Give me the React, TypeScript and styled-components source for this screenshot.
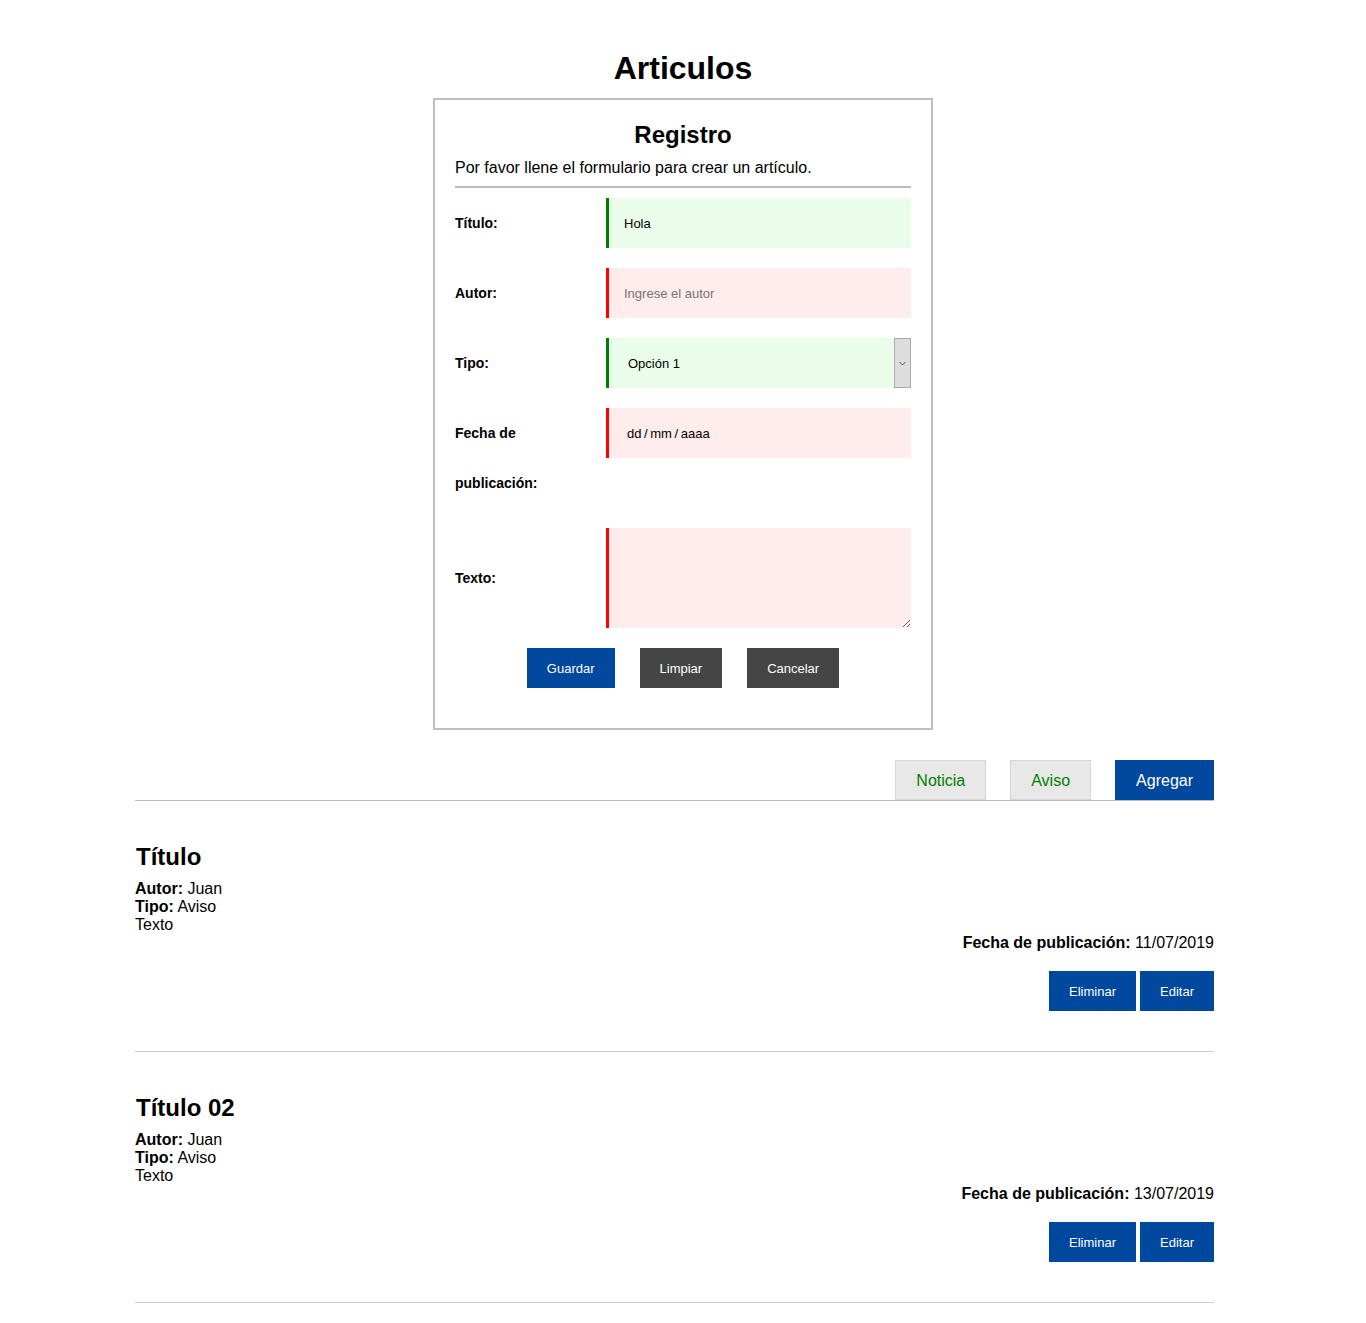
import React from "react";
import styled, { createGlobalStyle, css } from "styled-components";

const GlobalStyle = createGlobalStyle`
  html, body { margin: 0; padding: 0; background: #fff; }
  body {
    font-family: "Liberation Sans", Arial, sans-serif;
    color: #000;
  }
  * { box-sizing: border-box; }
`;

const Page = styled.div`
  padding-bottom: 20px;
`;

const PageTitle = styled.h1`
  text-align: center;
  font-size: 32px;
  line-height: 37px;
  font-weight: bold;
  margin: 50px 0 11px;
`;

const FormCard = styled.form`
  width: 500px;
  margin: 0 auto;
  border: 2px solid #bfbfbf;
  padding: 21px 20px 40px;
`;

const CardTitle = styled.h2`
  text-align: center;
  font-size: 24px;
  line-height: 28px;
  margin: 0;
`;

const CardSubtitle = styled.p`
  font-size: 16px;
  line-height: 20px;
  margin: 9px 0 0;
`;

const Divider = styled.div`
  border-top: 2px solid #bbb;
  margin: 8px 0 10px;
`;

const FieldRow = styled.div<{ $center?: boolean }>`
  display: grid;
  grid-template-columns: 151px 1fr;
  align-items: ${(p) => (p.$center ? "center" : "start")};
  margin-bottom: 20px;
`;

const FieldLabel = styled.label`
  font-weight: bold;
  font-size: 14px;
  line-height: 50px;
  padding-right: 20px;
`;

const fieldBase = css<{ $valid: boolean }>`
  width: 100%;
  border: none;
  border-left: 3px solid ${(p) => (p.$valid ? "#008000" : "#ff0000")};
  background: ${(p) => (p.$valid ? "#eafdea" : "#ffecec")};
  font-family: "Liberation Sans", Arial, sans-serif;
  font-size: 13px;
  color: #000;
  outline: none;
`;

const TextInput = styled.input<{ $valid: boolean }>`
  ${fieldBase};
  height: 50px;
  padding: 0 15px;
  &::placeholder { color: #757575; }
`;

const DateInput = styled(TextInput)`
  padding-left: 18px;
  word-spacing: -1px;
`;

const SelectWrap = styled.div<{ $valid: boolean }>`
  ${fieldBase};
  height: 50px;
  display: flex;
  align-items: stretch;
`;

const NativeSelect = styled.select`
  flex: 1;
  appearance: none;
  -webkit-appearance: none;
  border: none;
  background: transparent;
  font-family: "Liberation Sans", Arial, sans-serif;
  font-size: 13px;
  color: #000;
  padding: 0 0 0 19px;
  outline: none;
`;

const ArrowBox = styled.span`
  width: 17px;
  background: #dddddd;
  border: 1px solid #a9a9a9;
  display: flex;
  align-items: center;
  justify-content: center;
`;

const TextArea = styled.textarea<{ $valid: boolean }>`
  ${fieldBase};
  height: 100px;
  padding: 10px 15px;
  resize: vertical;
  display: block;
`;

const ButtonRow = styled.div`
  display: flex;
  justify-content: center;
  gap: 25px;
`;

const SolidButton = styled.button<{ $tone: "primary" | "dark" }>`
  height: 40px;
  padding: 0 20px;
  border: none;
  color: #fff;
  font-family: "Liberation Sans", Arial, sans-serif;
  font-size: 13px;
  background: ${(p) => (p.$tone === "primary" ? "#00479e" : "#454545")};
  cursor: pointer;
`;

const Section = styled.div`
  width: 1079px;
  margin-left: 135px;
`;

const Toolbar = styled.div`
  display: flex;
  justify-content: flex-end;
  gap: 24px;
  margin-top: 30px;
  border-bottom: 1px solid #bbb;
`;

const TabButton = styled.button<{ $active?: boolean }>`
  height: 40px;
  padding: 2px 20px 0;
  font-family: "Liberation Sans", Arial, sans-serif;
  font-size: 16px;
  border: 1px solid ${(p) => (p.$active ? "#00479e" : "#d6d6d6")};
  background: ${(p) => (p.$active ? "#00479e" : "#e8e8e8")};
  color: ${(p) => (p.$active ? "#fff" : "#008000")};
  cursor: pointer;
`;

const ArticleCard = styled.article`
  padding: 41px 0 40px;
  border-bottom: 1px solid #ccc;
`;

const ArticleTitle = styled.h2`
  font-size: 24px;
  line-height: 30px;
  margin: 0 0 8px 1px;
`;

const MetaLine = styled.div<{ $right?: boolean }>`
  font-size: 16px;
  line-height: 18px;
  text-align: ${(p) => (p.$right ? "right" : "left")};
`;

const ActionRow = styled.div`
  display: flex;
  justify-content: flex-end;
  gap: 4px;
  margin-top: 19px;
`;

const Chevron = () => (
  <svg width="7" height="5" viewBox="0 0 7 5">
    <path d="M0.5 1 L3.5 4 L6.5 1" fill="none" stroke="#555" strokeWidth="1" />
  </svg>
);

const articles = [
  { title: "Título", autor: "Juan", tipo: "Aviso", texto: "Texto", fecha: "11/07/2019" },
  { title: "Título 02", autor: "Juan", tipo: "Aviso", texto: "Texto", fecha: "13/07/2019" },
];

export default function App() {
  return (
    <Page>
      <GlobalStyle />
      <PageTitle>Articulos</PageTitle>
      <FormCard onSubmit={(e) => e.preventDefault()}>
        <CardTitle>Registro</CardTitle>
        <CardSubtitle>Por favor llene el formulario para crear un artículo.</CardSubtitle>
        <Divider />
        <FieldRow>
          <FieldLabel>Título:</FieldLabel>
          <TextInput $valid defaultValue="Hola" />
        </FieldRow>
        <FieldRow>
          <FieldLabel>Autor:</FieldLabel>
          <TextInput $valid={false} placeholder="Ingrese el autor" />
        </FieldRow>
        <FieldRow>
          <FieldLabel>Tipo:</FieldLabel>
          <SelectWrap $valid>
            <NativeSelect defaultValue="1">
              <option value="1">Opción 1</option>
              <option value="2">Opción 2</option>
            </NativeSelect>
            <ArrowBox>
              <Chevron />
            </ArrowBox>
          </SelectWrap>
        </FieldRow>
        <FieldRow>
          <FieldLabel>Fecha de publicación:</FieldLabel>
          <DateInput $valid={false} defaultValue="dd / mm / aaaa" readOnly />
        </FieldRow>
        <FieldRow $center>
          <FieldLabel>Texto:</FieldLabel>
          <TextArea $valid={false} />
        </FieldRow>
        <ButtonRow>
          <SolidButton $tone="primary" type="submit">Guardar</SolidButton>
          <SolidButton $tone="dark" type="reset">Limpiar</SolidButton>
          <SolidButton $tone="dark" type="button">Cancelar</SolidButton>
        </ButtonRow>
      </FormCard>
      <Section>
        <Toolbar>
          <TabButton>Noticia</TabButton>
          <TabButton>Aviso</TabButton>
          <TabButton $active>Agregar</TabButton>
        </Toolbar>
        {articles.map((a) => (
          <ArticleCard key={a.title}>
            <ArticleTitle>{a.title}</ArticleTitle>
            <MetaLine><b>Autor:</b> {a.autor}</MetaLine>
            <MetaLine><b>Tipo:</b> {a.tipo}</MetaLine>
            <MetaLine>{a.texto}</MetaLine>
            <MetaLine $right><b>Fecha de publicación:</b> {a.fecha}</MetaLine>
            <ActionRow>
              <SolidButton $tone="primary">Eliminar</SolidButton>
              <SolidButton $tone="primary">Editar</SolidButton>
            </ActionRow>
          </ArticleCard>
        ))}
      </Section>
    </Page>
  );
}
